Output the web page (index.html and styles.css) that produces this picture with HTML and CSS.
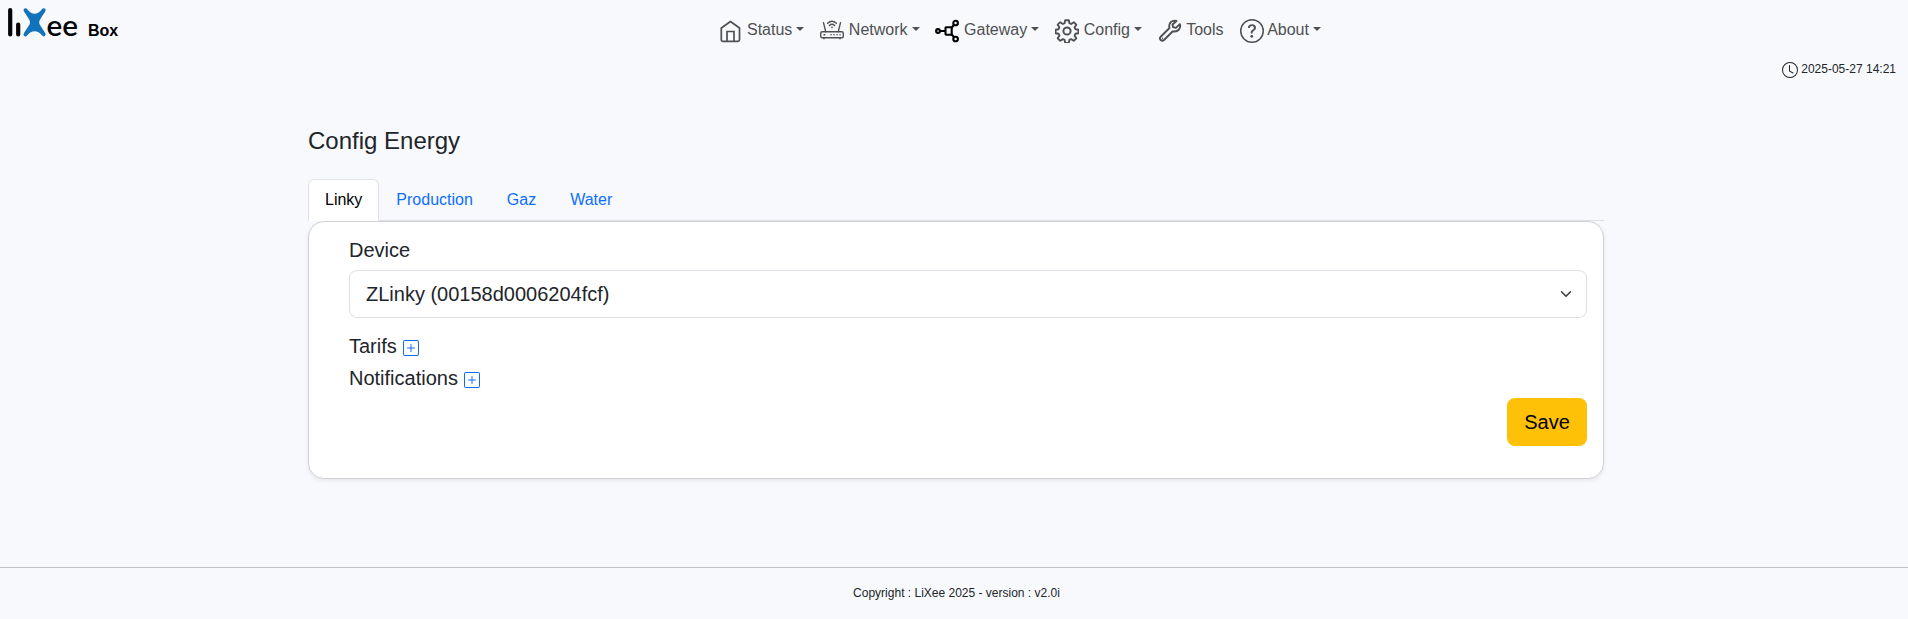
FILE: index.html
```html
<!DOCTYPE html>
<html lang="en">
<head>
<meta charset="utf-8">
<title>LiXee Box - Config Energy</title>
<link rel="stylesheet" href="styles.css">
</head>
<body>
<header class="navbar">
  <a class="brand">
    <svg class="logo" width="80" height="38" viewBox="0 0 80 38" role="img" aria-label="LiXee">
      <path d="M10.200 10v24.500M18.200 24.500v10" stroke="#050505" stroke-width="4.200" stroke-linecap="round"/>
      <path d="M25.500 10.200Q29.500 15.800 34.600 15.800Q39.700 15.800 43.700 10.200L39 17.500Q35.400 22.500 39 27L43.700 34.400Q39.700 29.300 34.600 29.300Q29.500 29.300 25.500 34.400L30.200 27Q33.800 22.500 30.200 17.500Z" fill="#1173bb" stroke="#1173bb" stroke-width="3.900" stroke-linejoin="round"/>
      <text class="logo-text" x="46.500" y="36.300" textLength="31.500" lengthAdjust="spacingAndGlyphs">ee</text>
    </svg>
    <span class="brand-name">Box</span>
  </a>
  <nav class="menu">
    <a class="nav-link">
      <svg width="24" height="24" viewBox="0 0 24 24" fill="none" stroke="currentColor" stroke-width="1.700"><path d="M2.300 9 11.500 2.500l9 6.500V20.700a1.600 1.600 0 0 1-1.600 1.600H3.900a1.600 1.600 0 0 1-1.600-1.600z" stroke-linejoin="round"/><path d="M8 22V12.500h7V22"/></svg>
      <span class="caret">Status</span>
    </a>
    <a class="nav-link">
      <svg width="24" height="24" viewBox="0 0 24 24" fill="none" stroke="currentColor" stroke-width="1.400" stroke-linecap="round"><rect x=".7" y="12.700" width="22.600" height="6" rx="1.500"/><path d="M3.500 3.700 5.700 12.700M20.500 3.700l-2.200 9M4 19.200v.6M20 19.200v.6M7.600 4.300q4.400-4 8.800 0M9.300 6.500q2.700-2.400 5.400 0"/><circle cx="12" cy="8.400" r=".8" fill="currentColor" stroke="none"/><path d="M4 15.700h.8M11 15.700h.1M14 15.700h.1M17 15.700h.1M20 15.700h.1" stroke-width="1.500"/></svg>
      <span class="caret">Network</span>
    </a>
    <a class="nav-link">
      <svg class="dark" width="24" height="24" viewBox="0 0 24 24" fill="none" stroke="currentColor" stroke-width="2.100"><circle cx="2" cy="12" r="1.900"/><circle cx="19.600" cy="4" r="2.300"/><circle cx="19.600" cy="20" r="2.300"/><rect x="9.500" y="8.300" width="6.200" height="7.400" rx=".6"/><path d="M4 12h5.500M15.500 8.800l2.600-3M15.500 15.200l2.600 3"/></svg>
      <span class="caret">Gateway</span>
    </a>
    <a class="nav-link">
      <svg width="24" height="24" viewBox="0 0 24 24" fill="none" stroke="currentColor" stroke-width="1.900" stroke-linejoin="round"><path d="M10.200 1.200h3.600l.6 3 1.700.8 2.700-1.800 2.500 2.500-1.700 2.600.8 1.900 3 .6v3.400l-3 .6-.8 1.900 1.700 2.600-2.500 2.500-2.700-1.700-1.700.8-.6 3h-3.600l-.6-3-1.700-.8-2.700 1.700-2.500-2.500 1.700-2.600-.8-1.900-3-.6v-3.400l3-.6.8-1.900-1.700-2.600 2.500-2.500L7.900 5l1.700-.8z"/><circle cx="12" cy="12" r="3.600" stroke-width="2"/></svg>
      <span class="caret">Config</span>
    </a>
    <a class="nav-link">
      <svg width="24" height="24" viewBox="0 0 24 24" fill="none" stroke="currentColor" stroke-width="1.900" stroke-linejoin="round"><path d="M18.500 2c-4-1.500-8.500 2-7 7L2.700 17.700a2.300 2.300 0 0 0 3.300 3.300l8.800-8.700c5 1.300 8.400-3 7.100-7.200l-4 3.800-2.800-.7-.6-2.700z"/><circle cx="4.500" cy="19.200" r=".7" fill="currentColor" stroke="none"/></svg>
      <span>Tools</span>
    </a>
    <a class="nav-link">
      <svg width="24" height="24" viewBox="0 0 16 16" fill="currentColor"><path d="M8 15A7 7 0 1 1 8 1a7 7 0 0 1 0 14m0 1A8 8 0 1 0 8 0a8 8 0 0 0 0 16"/><path d="M5.255 5.786a.237.237 0 0 0 .241.247h.825c.138 0 .248-.113.266-.25.090-.656.540-1.134 1.342-1.134.686 0 1.314.343 1.314 1.168 0 .635-.374.927-.965 1.371-.673.489-1.206 1.060-1.168 1.987l.003.217a.25.25 0 0 0 .25.246h.811a.25.25 0 0 0 .25-.25v-.105c0-.718.273-.927 1.010-1.486.609-.463 1.244-.977 1.244-2.056 0-1.511-1.276-2.241-2.673-2.241-1.267 0-2.655.590-2.750 2.286m1.557 5.763c0 .533.425.927 1.010.927.609 0 1.028-.394 1.028-.927 0-.552-.420-.940-1.029-.940-.584 0-1.009.388-1.009.940"/></svg>
      <span class="caret">About</span>
    </a>
  </nav>
</header>
<div class="clock">
  <svg width="16" height="16" viewBox="0 0 16 16" fill="currentColor"><path d="M8 3.500a.5.5 0 0 0-1 0V9a.5.5 0 0 0 .252.434l3.500 2a.5.5 0 0 0 .496-.868L8 8.710z"/><path d="M8 16A8 8 0 1 0 8 0a8 8 0 0 0 0 16m7-8A7 7 0 1 1 1 8a7 7 0 0 1 14 0"/></svg>
  <span>2025-05-27 14:21</span>
</div>
<main class="container">
  <h4 class="title">Config Energy</h4>
  <div class="tabs">
    <a class="tab active">Linky</a>
    <a class="tab">Production</a>
    <a class="tab">Gaz</a>
    <a class="tab">Water</a>
  </div>
  <section class="card">
    <label class="label">Device</label>
    <div class="select">
      <span>ZLinky (00158d0006204fcf)</span>
      <svg width="16" height="12" viewBox="0 0 16 16" fill="none" stroke="#343a40" stroke-width="2" stroke-linecap="round" stroke-linejoin="round"><path d="m2 5 6 6 6-6"/></svg>
    </div>
    <div class="row"><span>Tarifs</span><svg class="plus" width="16" height="16" viewBox="0 0 16 16" fill="currentColor"><path d="M14 1a1 1 0 0 1 1 1v12a1 1 0 0 1-1 1H2a1 1 0 0 1-1-1V2a1 1 0 0 1 1-1zM2 0a2 2 0 0 0-2 2v12a2 2 0 0 0 2 2h12a2 2 0 0 0 2-2V2a2 2 0 0 0-2-2z"/><path d="M8 4a.5.5 0 0 1 .5.5v3h3a.5.5 0 0 1 0 1h-3v3a.5.5 0 0 1-1 0v-3h-3a.5.5 0 0 1 0-1h3v-3A.5.5 0 0 1 8 4"/></svg></div>
    <div class="row"><span>Notifications</span><svg class="plus" width="16" height="16" viewBox="0 0 16 16" fill="currentColor"><path d="M14 1a1 1 0 0 1 1 1v12a1 1 0 0 1-1 1H2a1 1 0 0 1-1-1V2a1 1 0 0 1 1-1zM2 0a2 2 0 0 0-2 2v12a2 2 0 0 0 2 2h12a2 2 0 0 0 2-2V2a2 2 0 0 0-2-2z"/><path d="M8 4a.5.5 0 0 1 .5.5v3h3a.5.5 0 0 1 0 1h-3v3a.5.5 0 0 1-1 0v-3h-3a.5.5 0 0 1 0-1h3v-3A.5.5 0 0 1 8 4"/></svg></div>
    <div class="actions"><button class="save" type="button">Save</button></div>
  </section>
</main>
<footer class="footer">Copyright : LiXee 2025 - version : v2.0i</footer>
</body>
</html>
```
FILE: styles.css
```css
*, *::before, *::after { box-sizing: border-box; }
body {
  margin: 0;
  min-height: 619px;
  display: flex;
  flex-direction: column;
  background: #f8f9fd;
  color: #212529;
  font: 16px/1.5 "Liberation Sans", Arial, sans-serif;
}
svg { flex: none; }
.navbar { display: flex; height: 60px; }
.brand { display: flex; width: 710px; }
.logo { overflow: visible; }
.logo-text {
  font: 600 28px/1 Lato, sans-serif;
  fill: #050505;
}
.brand-name {
  margin: 19px 0 0 8px;
  color: #000;
  font-weight: bold;
}
.menu { display: flex; height: 40px; margin: 10px 0 0 .5px; }
.nav-link {
  display: block;
  padding: 8px;
  color: #4f5051;
  white-space: nowrap;
}
.nav-link svg { vertical-align: middle; }
.nav-link .dark { color: #000; overflow: visible; }
.caret::after {
  content: "";
  display: inline-block;
  margin-left: .255em;
  vertical-align: .255em;
  border-top: .3em solid;
  border-right: .3em solid transparent;
  border-left: .3em solid transparent;
}
.clock {
  display: flex;
  justify-content: flex-end;
  align-items: center;
  gap: 3px;
  height: 18px;
  padding-right: 12px;
  font-size: 12px;
}
.clock svg { margin-top: 2px; }
.container { width: 1296px; margin-left: 308px; padding-top: 48px; }
.title {
  margin: 0 0 24px;
  font-size: 24px;
  font-weight: 500;
  line-height: 29px;
}
.tabs { display: flex; height: 42px; border-bottom: 1px solid #dee2e6; }
.tab {
  height: 42px;
  padding: 8px 16px;
  border: 1px solid transparent;
  border-radius: 6px 6px 0 0;
  color: #0d6efd;
}
.tab.active {
  background: #fff;
  border-color: #dee2e6 #dee2e6 #fff;
  color: #000;
}
.card {
  height: 258px;
  padding: 13px 16px 0 40px;
  background: #fff;
  border: 1px solid #d0d1d3;
  border-radius: 16px;
  box-shadow: 0 2px 4px rgba(0, 0, 0, .075);
  font-size: 20px;
}
.label { display: block; height: 35px; line-height: 30px; }
.select {
  display: flex;
  align-items: center;
  justify-content: space-between;
  height: 48px;
  padding: 0 12px 0 16px;
  border: 1px solid #dee2e6;
  border-radius: 8px;
}
.row { display: flex; gap: 6px; height: 32px; line-height: 30px; }
.select + .row { margin-top: 13px; }
.plus { margin-top: 9px; color: #0d6efd; }
.actions { display: flex; justify-content: flex-end; margin-top: 3px; }
.save {
  width: 80px;
  height: 48px;
  padding: 0;
  border: 0;
  border-radius: 8px;
  background: #ffc107;
  color: #000;
  font: 20px/30px "Liberation Sans", Arial, sans-serif;
}
.footer {
  margin-top: 88px;
  padding: 16px 0 0 5px;
  border-top: 1px solid #c1c2c6;
  font-size: 12px;
  text-align: center;
}
```
